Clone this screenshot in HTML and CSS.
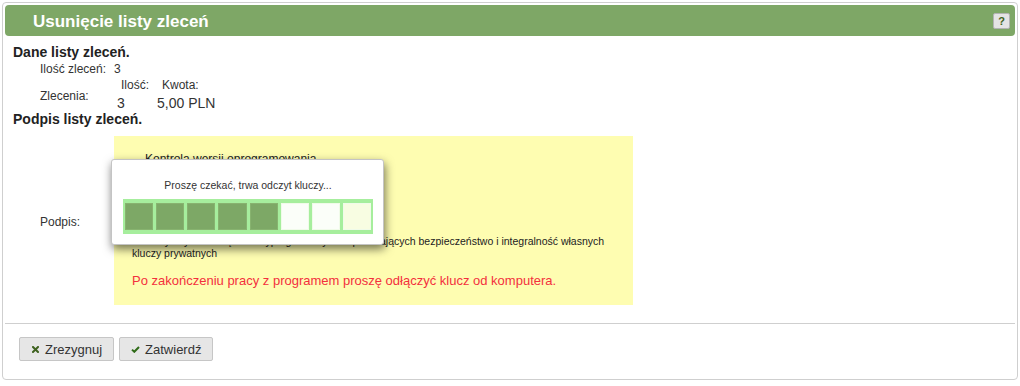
FILE: index.html
```html
<!DOCTYPE html>
<html lang="pl">
<head>
    <meta charset="UTF-8">
    <title>Usunięcie listy zleceń</title>
    <link rel="stylesheet" href="styles.css">
</head>
<body>
    <div class="window">
        <div class="window-header">
            <h1 class="window-title">Usunięcie listy zleceń</h1>
            <button class="help-btn" type="button">?</button>
        </div>
        <div class="window-body">
            <h2 class="section-title">Dane listy zleceń.</h2>
            <div class="form-grid">
                <div class="form-label">Ilość zleceń:</div>
                <div class="form-value">3</div>
                <div class="form-label form-label-mid">Zlecenia:</div>
                <div class="orders">
                    <div class="orders-head orders-count">Ilość:</div>
                    <div class="orders-head orders-amount">Kwota:</div>
                    <div class="orders-val orders-count">3</div>
                    <div class="orders-val orders-amount">5,00 PLN</div>
                </div>
            </div>
            <h2 class="section-title">Podpis listy zleceń.</h2>
            <div class="form-grid sign-grid">
                <div class="form-label form-label-mid">Podpis:</div>
                <div class="sign-box">
                    <div class="sign-step">Kontrola wersji oprogramowania</div>
                    <p class="sign-note">Prosimy używać urządzeń kryptograficznych zapewniających bezpieczeństwo i integralność własnych kluczy prywatnych</p>
                    <p class="sign-warning">Po zakończeniu pracy z programem proszę odłączyć klucz od komputera.</p>
                </div>
            </div>
        </div>
        <div class="window-footer">
            <button class="btn" type="button">
                <span class="btn-icon">
                    <svg width="7" height="7" viewBox="0 0 7 7"><path d="M1 1L6 6M6 1L1 6" stroke="#3f6220" stroke-width="2" stroke-linecap="square"/></svg>
                </span>
                Zrezygnuj
            </button>
            <button class="btn" type="button">
                <span class="btn-icon">
                    <svg width="9" height="7" viewBox="0 0 9 7"><path d="M1 3.6L3.3 5.8L8 1" fill="none" stroke="#2f6b18" stroke-width="2"/></svg>
                </span>
                Zatwierdź
            </button>
        </div>
    </div>

    <div class="modal">
        <div class="modal-text">Proszę czekać, trwa odczyt kluczy...</div>
        <div class="progress">
            <div class="progress-cell done"></div>
            <div class="progress-cell done"></div>
            <div class="progress-cell done"></div>
            <div class="progress-cell done"></div>
            <div class="progress-cell done"></div>
            <div class="progress-cell"></div>
            <div class="progress-cell"></div>
            <div class="progress-cell next"></div>
        </div>
    </div>
</body>
</html>
```

FILE: styles.css
```css
:root {
    --green: #7ea766;
    --green-dark: #3f6220;
    --border: #cfcfcf;
    --text: #222;
    --label: #333;
    --note-bg: #fefdb1;
    --warn: #f3303d;
}
body {
    margin: 0;
    font-family: "Liberation Sans", Arial, sans-serif;
    color: var(--text);
    background: #fff;
}
.window {
    margin: 2px;
    padding: 2px;
    border: 1px solid var(--border);
    border-radius: 4px;
}
.window-header {
    height: 31px;
    background: var(--green);
    border-radius: 4px;
    display: flex;
    align-items: center;
    justify-content: space-between;
    padding: 0 5px 0 28px;
}
.window-title {
    margin: 0;
    padding-top: 2px;
    font-size: 17px;
    font-weight: 700;
    color: #fff;
}
.help-btn {
    width: 17px; height: 16px;
    padding: 0;
    border: 1px solid #b3b3b3;
    border-radius: 2px;
    background: #e4e4e4;
    color: var(--green-dark);
    font-family: inherit;
    font-size: 11px;
    font-weight: 700;
    line-height: 14px;
}
.window-body {
    padding: 8px 0 18px 8px;
}
.section-title {
    margin: 0;
    font-size: 14px;
    line-height: 16px;
    font-weight: 700;
}
.form-grid {
    display: grid;
    grid-template-columns: 74px auto;
    row-gap: 2px;
    margin: 2px 0 0 27px;
    font-size: 12px;
    line-height: 14px;
    color: var(--label);
}
.form-label-mid { align-self: center; padding-top: 3px; }
.orders {
    display: grid;
    grid-template-columns: 43px auto;
}
.orders-head.orders-count { padding-left: 7px; }
.orders-head.orders-amount { padding-left: 5px; }
.orders-val {
    margin-top: 3px;
    font-size: 14px;
    line-height: 16px;
}
.orders-val.orders-count { padding-left: 3px; }
.sign-grid { margin-top: 9px; }
.sign-box {
    box-sizing: border-box;
    width: 519px; height: 169px;
    padding: 15px 18px 0 18px;
    background: var(--note-bg);
    color: var(--text);
}
.sign-step {
    padding-left: 13px;
    font-size: 12px;
    line-height: 16px;
}
.sign-note {
    margin: 69px 0 0 0;
    font-size: 10.5px;
    line-height: 11.5px;
}
.sign-warning {
    margin: 14px 0 0 0;
    font-size: 13px;
    line-height: 15px;
    color: var(--warn);
}
.window-footer {
    border-top: 1px solid var(--border);
    padding: 13px 0 16px 14px;
    display: flex;
    gap: 5px;
}
.btn {
    height: 24px;
    display: flex; align-items: center; gap: 5px;
    padding: 0 11px 0 10px;
    border: 1px solid #c6c6c6;
    border-radius: 2px;
    background: #e6e6e6;
    color: #333;
    font-family: inherit;
    font-size: 13px;
}
.btn-icon {
    width: 10px;
    display: flex; justify-content: center;
}

/* okno oczekiwania na odczyt kluczy */
.modal {
    position: absolute;
    left: 111px; top: 159px;
    width: 273px;
    box-sizing: border-box;
    padding: 19px 10px 10px 11px;
    background: #fff;
    border: 1px solid #c4c4c4;
    border-radius: 3px;
    box-shadow: 1px 4px 10px rgba(0,0,0,0.55);
}
.modal-text {
    text-align: center;
    font-size: 10.5px;
    line-height: 12.5px;
    color: #333;
}
.progress {
    margin-top: 7px;
    height: 35px;
    box-sizing: border-box;
    padding: 4px 2px;
    display: grid;
    grid-template-columns: repeat(8, 1fr);
    gap: 3px;
    background: #a6ee9d;
}
.progress-cell {
    background: #fbfef9;
    border: 1px solid #f0fbe9;
}
.progress-cell.done {
    background: #7da866;
    border-color: #87b36f;
}
.progress-cell.next { background: #f8fde2; }
```
